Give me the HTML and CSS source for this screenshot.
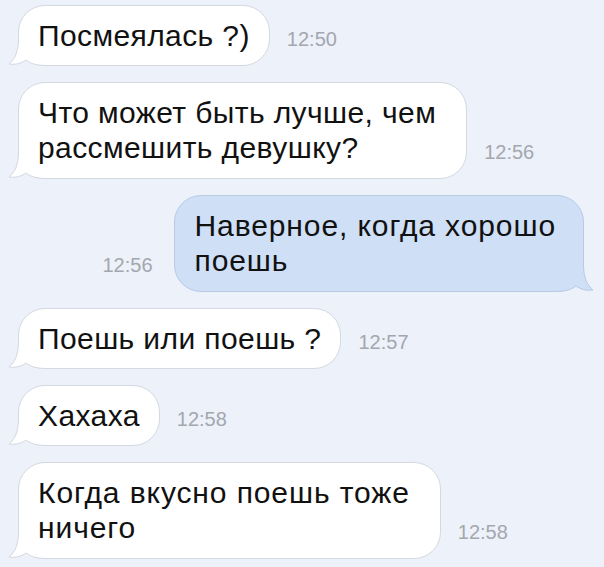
FILE: index.html
```html
<!DOCTYPE html>
<html lang="ru">
<head>
  <meta charset="UTF-8"/>
  <title>Сообщения</title>
  <link rel="stylesheet" href="styles.css">
</head>
<body>
  <div class="chat">

    <div class="row in">
      <div class="bubble">
        <svg class="tail" width="40" height="28" viewBox="0 0 40 28"><path class="fill" d="M11.5 0 C11.5 14 8 21 2 26 C9 27 15 25 19 22 C23 25 28 27.5 40 27.5 L40 0 Z"/><path class="line" d="M11.5 0 C11.5 14 8 21 2 26 C9 27 15 25 19 22 C23 25 28 27.5 40 27.5"/></svg>
        <span class="msg">Посмеялась ?)</span>
      </div>
      <span class="time">12:50</span>
    </div>

    <div class="row in">
      <div class="bubble wide">
        <svg class="tail" width="40" height="28" viewBox="0 0 40 28"><path class="fill" d="M11.5 0 C11.5 14 8 21 2 26 C9 27 15 25 19 22 C23 25 28 27.5 40 27.5 L40 0 Z"/><path class="line" d="M11.5 0 C11.5 14 8 21 2 26 C9 27 15 25 19 22 C23 25 28 27.5 40 27.5"/></svg>
        <span class="msg">Что может быть лучше, чем<br>рассмешить девушку?</span>
      </div>
      <span class="time">12:56</span>
    </div>

    <div class="row out">
      <span class="time">12:56</span>
      <div class="bubble wide loose">
        <svg class="tail" width="40" height="28" viewBox="0 0 40 28"><path class="fill" d="M11.5 0 C11.5 14 8 21 2 26 C9 27 15 25 19 22 C23 25 28 27.5 40 27.5 L40 0 Z"/><path class="line" d="M11.5 0 C11.5 14 8 21 2 26 C9 27 15 25 19 22 C23 25 28 27.5 40 27.5"/></svg>
        <span class="msg">Наверное, когда хорошо<br>поешь</span>
      </div>
    </div>

    <div class="row in">
      <div class="bubble">
        <svg class="tail" width="40" height="28" viewBox="0 0 40 28"><path class="fill" d="M11.5 0 C11.5 14 8 21 2 26 C9 27 15 25 19 22 C23 25 28 27.5 40 27.5 L40 0 Z"/><path class="line" d="M11.5 0 C11.5 14 8 21 2 26 C9 27 15 25 19 22 C23 25 28 27.5 40 27.5"/></svg>
        <span class="msg">Поешь или поешь ?</span>
      </div>
      <span class="time">12:57</span>
    </div>

    <div class="row in">
      <div class="bubble">
        <svg class="tail" width="40" height="28" viewBox="0 0 40 28"><path class="fill" d="M11.5 0 C11.5 14 8 21 2 26 C9 27 15 25 19 22 C23 25 28 27.5 40 27.5 L40 0 Z"/><path class="line" d="M11.5 0 C11.5 14 8 21 2 26 C9 27 15 25 19 22 C23 25 28 27.5 40 27.5"/></svg>
        <span class="msg">Хахаха</span>
      </div>
      <span class="time">12:58</span>
    </div>

    <div class="row in">
      <div class="bubble wide loose">
        <svg class="tail" width="40" height="28" viewBox="0 0 40 28"><path class="fill" d="M11.5 0 C11.5 14 8 21 2 26 C9 27 15 25 19 22 C23 25 28 27.5 40 27.5 L40 0 Z"/><path class="line" d="M11.5 0 C11.5 14 8 21 2 26 C9 27 15 25 19 22 C23 25 28 27.5 40 27.5"/></svg>
        <span class="msg">Когда вкусно поешь тоже<br>ничего</span>
      </div>
      <span class="time">12:58</span>
    </div>

  </div>
</body>
</html>
```

FILE: styles.css
```css
* { margin:0; padding:0; box-sizing:border-box }
body {
  background:#edf1fa; overflow:hidden;
  font-family:"Liberation Sans",Arial,sans-serif;
}

.chat {
  display:flex; flex-direction:column; gap:16px;
  padding:5px 20px 0 18px;
}
.row {
  display:flex; align-items:flex-end; gap:17px;
}
.row.out { justify-content:flex-end; gap:21px; }

/* bubbles */
.bubble {
  position:relative;
  padding:12px 19px 12px 19px;
  font-size:30px; line-height:35px; letter-spacing:.4px; color:#111;
  background:#fff; border:1px solid #d3d8e1; border-radius:27px;
}
.bubble.wide { padding:12px 30px 13px 19px; }
.bubble.loose { letter-spacing:.9px; }
.out .bubble {
  background:#cfdff6; border-color:#b9cae4;
  padding:12px 27px 13px 20px;
}
.msg { position:relative; }

.tail {
  position:absolute; left:-12px; bottom:-1px;
}
.tail .fill { fill:#fff; }
.tail .line { fill:none; stroke:#d3d8e1; stroke-width:1; }
.out .tail { left:auto; right:-12px; transform:scaleX(-1); }
.out .tail .fill { fill:#cfdff6; }
.out .tail .line { stroke:#b9cae4; }

/* timestamps */
.time {
  font-size:20px; line-height:22px; color:#a3a7ae;
  margin-bottom:16px; white-space:nowrap;
}
```
